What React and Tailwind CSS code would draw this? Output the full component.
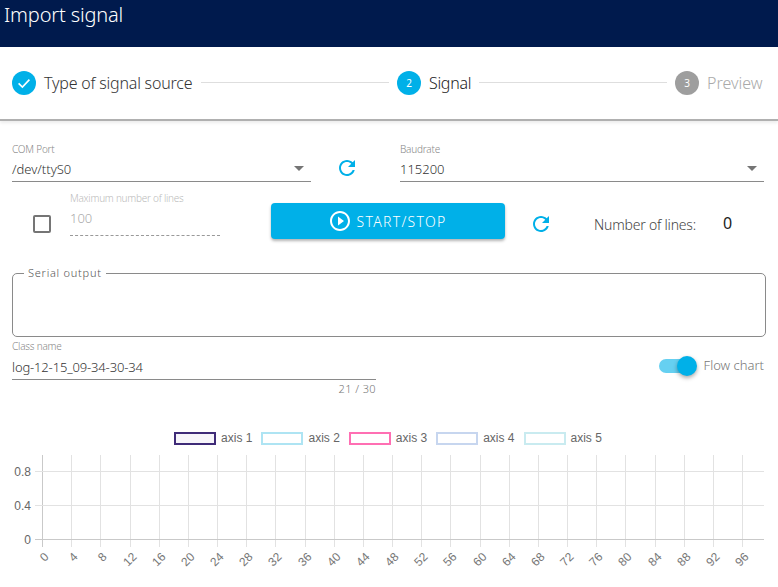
import React from "react";

const ubuntuLike = "font-['Noto_Sans',sans-serif]";
const chartFont = "'Liberation Sans', sans-serif";

const legend = [
  { name: "axis 1", className: "border-[#3f2b78] bg-[#f7f5fa]" },
  { name: "axis 2", className: "border-[#aee4f3] bg-white" },
  { name: "axis 3", className: "border-[#ff6fb3] bg-white" },
  { name: "axis 4", className: "border-[#c7d6ef] bg-white" },
  { name: "axis 5", className: "border-[#c9ebf0] bg-white" },
];

const xTicks = Array.from({ length: 25 }, (_, i) => i * 4);
const yTicks = [
  { label: "0.8", y: 471.5 },
  { label: "0.4", y: 505.5 },
  { label: "0", y: 539.5 },
];

const RefreshIcon = () => (
  <svg viewBox="0 0 24 24" className="w-6 h-6 fill-[#00b0e8]">
    <path d="M17.65 6.35C16.2 4.9 14.21 4 12 4c-4.42 0-7.99 3.58-7.99 8s3.57 8 7.99 8c3.73 0 6.84-2.55 7.73-6h-2.08c-.82 2.33-3.04 4-5.65 4-3.31 0-6-2.69-6-6s2.69-6 6-6c1.66 0 3.14.69 4.22 1.78L13 11h7V4l-2.35 2.35z" />
  </svg>
);

const Arrow = () => (
  <span className="w-0 h-0 border-x-[5px] border-x-transparent border-t-[5px] border-t-[#757575]" />
);

const StepCircle = ({ children, active }) => (
  <span
    className={`w-6 h-6 rounded-full flex items-center justify-center text-[10px] text-white shrink-0 ${
      active ? "bg-[#00b0e8]" : "bg-[#9e9e9e]"
    }`}
  >
    {children}
  </span>
);

const Line = () => <div className="flex-1 h-px bg-[#dedede] mx-2 -mt-[2px]" />;

const SelectField = ({ label, value, width }) => (
  <div className={`${width} border-b border-[#8a8a8a] h-[39px] relative`}>
    <div className="text-[10px] leading-[12px] tracking-[-0.2px] text-[#888] font-light">{label}</div>
    <div className="flex items-center justify-between pt-[4px]">
      <span className="text-[13px] leading-[20px] text-[#333] font-light">{value}</span>
      <span className="flex pr-[7px] -mt-[1px]">
        <Arrow />
      </span>
    </div>
  </div>
);

const Chart = () => (
  <svg viewBox="0 0 778 132" className="block w-[778px] h-[132px]">
    <g transform="translate(0,-455)">
      {xTicks.map((t, i) => {
        const x = Math.round(42 + i * 29.17) + 0.5;
        return (
          <g key={t}>
            <line x1={x} x2={x} y1="455" y2="547" stroke={i === 0 ? "#c9c9c9" : "#e2e2e2"} />
            <text
              x={x + 4.2}
              y="558.6"
              textAnchor="end"
              fontSize="12"
              fontFamily={chartFont}
              fill="#777"
              transform={`rotate(-45 ${x + 4.2} 554.6)`}
            >
              {t}
            </text>
          </g>
        );
      })}
      {yTicks.map((t) => (
        <g key={t.label}>
          <line
            x1="35"
            x2="764"
            y1={t.y}
            y2={t.y}
            stroke={t.label === "0" ? "#c9c9c9" : "#e2e2e2"}
          />
          <text
            x="31"
            y={t.y + 4}
            textAnchor="end"
            fontSize="12"
            fontFamily={chartFont}
            fill="#666"
          >
            {t.label}
          </text>
        </g>
      ))}
    </g>
  </svg>
);

export default function App() {
  return (
    <div className={`w-[778px] h-[587px] overflow-hidden bg-white ${ubuntuLike}`}>
      <header className="h-[47px] bg-[#001a4d] px-1 text-white text-[20px] leading-[30px] tracking-[-0.15px] font-light">
        Import signal
      </header>

      {/* stepper */}
      <div className="h-[74px] flex items-center pl-3 pr-[14px] border-b-2 border-[#b0b0b0] shadow-[0_2px_3px_rgba(0,0,0,0.08)]">
        <svg viewBox="0 0 24 24" className="w-6 h-6 shrink-0">
          <circle cx="12" cy="12" r="12" fill="#00b0e8" />
          <path d="M6.6 12.4l3.8 3.6 7-7.4" fill="none" stroke="#fff" strokeWidth="1.6" />
        </svg>
        <span className="ml-2 w-[149px] whitespace-nowrap text-[16px] tracking-[-0.2px] text-[#333] font-light">
          Type of signal source
        </span>
        <Line />
        <StepCircle active>2</StepCircle>
        <span className="ml-2 w-[42px] text-[16px] tracking-[-0.3px] text-[#222] font-light">Signal</span>
        <Line />
        <StepCircle>3</StepCircle>
        <span className="ml-2 w-[57px] text-[16px] text-[#aaa] font-light">Preview</span>
      </div>

      <div className="px-3 pt-[22px]">
        {/* com port row */}
        <div className="flex items-start">
          <SelectField label="COM Port" value="/dev/ttyS0" width="w-[299px]" />
          <div className="w-[72px] mr-[17px] mt-[13px] flex justify-center">
            <RefreshIcon />
          </div>
          <SelectField label="Baudrate" value="115200" width="w-[364px]" />
        </div>

        {/* run row */}
        <div className="flex items-start mt-[10px] h-[81px]">
          <div className="ml-[21px] mt-[23px] w-[18px] h-[18px] border-2 border-[#757575] rounded-[2px]" />
          <div className="ml-[19px] w-[150px] h-[44px] border-b border-dashed border-[#999]">
            <div className="text-[10px] leading-[12px] tracking-[-0.25px] text-[#bbb] font-light">
              Maximum number of lines
            </div>
            <div className="text-[13px] leading-[20px] pt-[4px] text-[#aaa] font-light">100</div>
          </div>
          <button className="ml-[51px] mt-[11px] w-[234px] h-9 rounded bg-[#00b0e8] text-white flex items-center justify-center gap-[4px] text-[14px] tracking-[1.3px] font-light shadow-[0_2px_3px_rgba(0,0,0,0.3)]">
            <svg viewBox="0 0 24 24" className="w-6 h-6 fill-white -ml-[1px]">
              <path d="M10 16.5l6-4.5-6-4.5v9zM12 2C6.48 2 2 6.48 2 12s4.48 10 10 10 10-4.48 10-10S17.52 2 12 2zm0 18c-4.41 0-8-3.59-8-8s3.59-8 8-8 8 3.59 8 8-3.59 8-8 8z" />
            </svg>
            START/STOP
          </button>
          <div className="ml-6 mt-5">
            <RefreshIcon />
          </div>
          <span className="ml-[41px] mt-[23px] w-[102px] whitespace-nowrap text-[14px] leading-5 tracking-[-0.2px] text-[#444] font-light">
            Number of lines:
          </span>
          <span className="ml-[27px] mt-[21px] text-[16px] leading-5 text-[#222]">0</span>
        </div>

        {/* serial output */}
        <fieldset className="h-[71px] -mt-[7px] border border-[#8a8a8a] rounded-[5px] pl-[11px]">
          <legend className="px-1 text-[11px] leading-[14px] tracking-[0.75px] text-[#555] font-light">
            Serial output
          </legend>
        </fieldset>

        {/* class name + toggle */}
        <div className="flex items-start justify-between mt-[3px]">
          <div className="w-[364px]">
            <div className="text-[10px] leading-[12px] tracking-[-0.2px] text-[#888] font-light">Class name</div>
            <div className="border-b border-[#8a8a8a] h-[28px] pt-[5px] text-[13px] leading-5 tracking-[-0.15px] text-[#333] font-light">
              log-12-15_09-34-30-34
            </div>
            <div className="text-right text-[11px] leading-[18px] tracking-[0.4px] text-[#777] font-light">
              21 / 30
            </div>
          </div>
          <div className="flex items-center mt-[16px] mr-[2px]">
            <div className="relative w-[38px] h-5 flex items-center">
              <div className="w-[34px] h-[14px] rounded-full bg-[#66d0f1]" />
              <div className="absolute right-0 w-5 h-5 rounded-full bg-[#00b0e8] shadow-[0_2px_4px_rgba(0,0,0,0.35)]" />
            </div>
            <span className="ml-[7px] whitespace-nowrap text-[13px] text-[#777] font-light">
              Flow chart
            </span>
          </div>
        </div>
      </div>

      {/* legend */}
      <div
        className="flex justify-center gap-[9px] mt-[34px] h-[13px] pr-[2px] text-[12px] leading-[13px] text-[#666]"
        style={{ fontFamily: chartFont }}
      >
        {legend.map((item) => (
          <div key={item.name} className="flex items-center gap-[5px]">
            <span className={`w-[42px] h-[13px] border-2 ${item.className}`} />
            {item.name}
          </div>
        ))}
      </div>
      <div className="mt-[10px]">
        <Chart />
      </div>
    </div>
  );
}
